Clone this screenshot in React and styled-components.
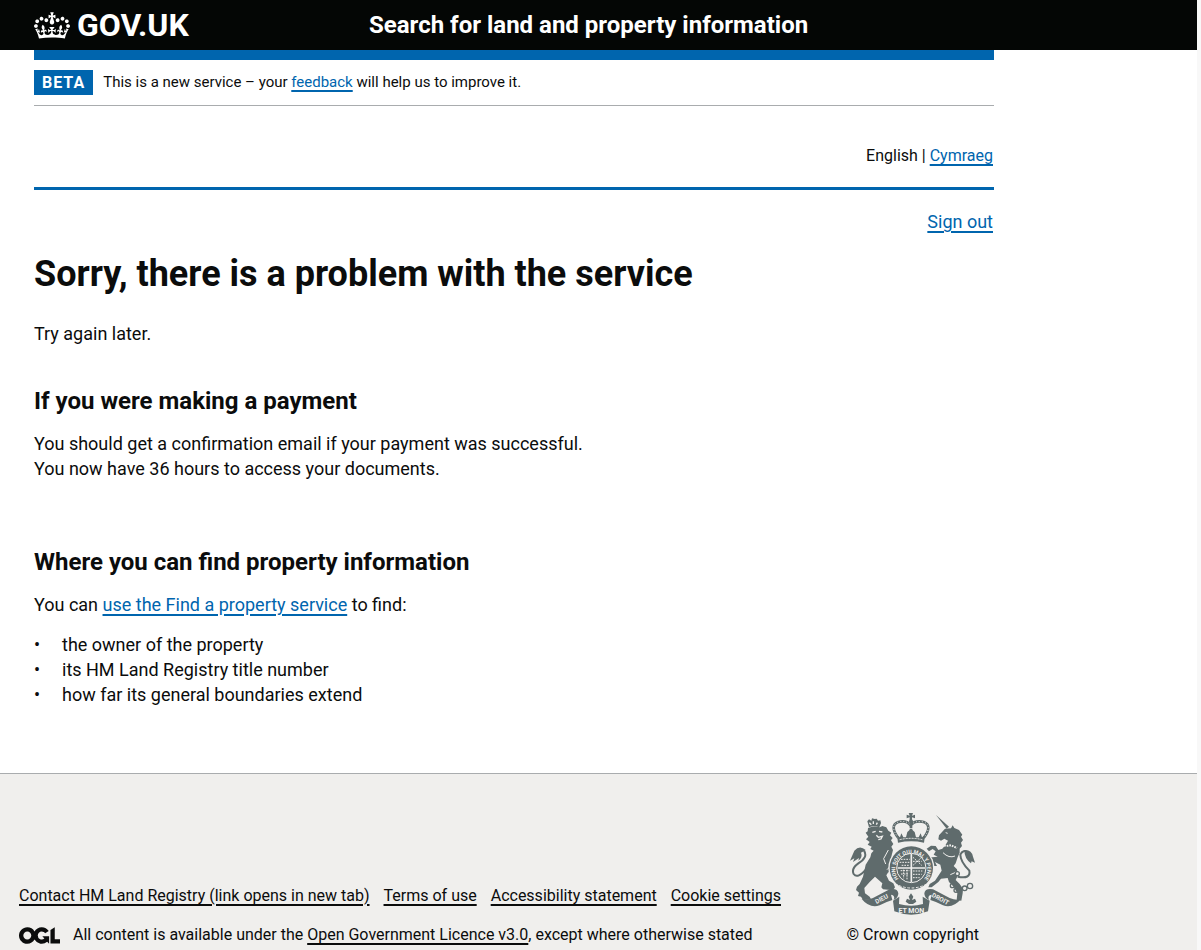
import React from 'react';
import styled, { createGlobalStyle } from 'styled-components';

const ink = '#0b0c0c';
const black = '#040605';
const blue = '#0065ae';
const rule = '#a9acae';
const stone = '#5f6b6c';
const footerBg = '#f0efed';

const GlobalStyle = createGlobalStyle`
  *, *::before, *::after { box-sizing: border-box; }
  body {
    margin: 0;
    background: #fff;
    color: ${ink};
    font-family: Roboto, "Liberation Sans", sans-serif;
    font-size: 18px;
    line-height: 25px;
  }
`;

const Page = styled.div`
  border-right: 4px solid #f8f8f8;
`;

const Header = styled.header`
  background: ${black};
  color: #fff;
`;

const HeaderInner = styled.div`
  display: grid;
  grid-template-columns: 335px 1fr;
  align-items: center;
  max-width: 994px;
  min-height: 50px;
  padding-left: 34px;
`;

const HomeLink = styled.a`
  display: flex;
  align-items: center;
  gap: 7px;
  color: inherit;
  font-size: 32px;
  font-weight: 700;
  line-height: 30px;
  text-decoration: none;
`;

const ServiceName = styled.a`
  color: inherit;
  font-size: 24px;
  font-weight: 700;
  line-height: 30px;
  text-decoration: none;
`;

const Container = styled.div`
  max-width: 994px;
  padding-left: 34px;
`;

const PhaseBanner = styled.div`
  display: flex;
  align-items: center;
  gap: 10px;
  padding: 10px 0;
  border-top: 10px solid ${blue};
  border-bottom: 1px solid ${rule};
  font-size: 15px;
`;

const PhaseTag = styled.strong`
  padding: 0 8px;
  background: ${blue};
  color: #fff;
  font-size: 16px;
  letter-spacing: 1px;
`;

const Link = styled.a`
  color: ${p => (p.$dark ? ink : blue)};
  text-decoration: underline;
  text-decoration-thickness: 2px;
  text-underline-offset: 3px;
`;

const LanguageBar = styled.nav`
  padding: 37px 1px 19px;
  border-bottom: 3px solid ${blue};
  font-size: 16px;
  text-align: right;
`;

const SignOut = styled.div`
  padding: 19px 1px 0;
  text-align: right;
`;

const Title = styled.h1`
  margin: 20px 0 27px;
  font-size: 36px;
  font-weight: 700;
  line-height: 40px;
`;

const Heading = styled.h2`
  margin: 0 0 15px;
  font-size: 24px;
  font-weight: 700;
  line-height: 30px;
`;

const Section = styled.section`
  margin-top: ${p => p.$space}px;
`;

const Text = styled.p`
  margin: 0;
`;

const List = styled.ul`
  margin: 15px 0 0;
  padding: 0;
  list-style: none;
`;

const Item = styled.li`
  display: flex;
  &::before {
    content: '•';
    width: 28px;
  }
`;

const Footer = styled.footer`
  margin-top: 66px;
  padding: 39px 0 5px 19px;
  background: ${footerBg};
  border-top: 1px solid ${rule};
  font-size: 16px;
  line-height: 20px;
`;

const FooterInner = styled.div`
  display: flex;
  align-items: flex-end;
  justify-content: space-between;
  max-width: 960px;
`;

const FooterMeta = styled.div`
  display: flex;
  flex-direction: column;
  gap: 19px;
`;

const FooterLinks = styled.nav`
  display: flex;
  gap: 14px;
`;

const Licence = styled.div`
  display: flex;
  align-items: center;
  gap: 13px;
`;

const Copyright = styled.a`
  display: flex;
  flex-direction: column;
  align-items: center;
  gap: 10px;
  color: ${ink};
  text-decoration: none;
`;

const Crown = () => (
  <svg width="36" height="27" viewBox="0 0 132 97" fill="currentColor" aria-hidden="true">
    <path d="M25 30.2c3.5 1.5 7.7-.2 9.1-3.7 1.5-3.6-.2-7.8-3.9-9.2-3.6-1.4-7.6.3-9.1 3.9-1.4 3.5.3 7.5 3.9 9zM9 39.5c3.6 1.5 7.8-.2 9.2-3.7 1.5-3.6-.2-7.8-3.9-9.1-3.6-1.5-7.6.2-9.1 3.8-1.4 3.5.3 7.5 3.8 9zM4.4 57.2c3.5 1.5 7.7-.2 9.1-3.8 1.5-3.6-.2-7.7-3.9-9.1-3.5-1.5-7.6.3-9.1 3.8-1.4 3.5.3 7.6 3.9 9.1zm38.3-21.4c3.5 1.5 7.7-.2 9.1-3.8 1.5-3.6-.2-7.7-3.9-9.1-3.6-1.5-7.6.3-9.1 3.8-1.3 3.6.4 7.7 3.9 9.1zm64.4-5.6c-3.6 1.5-7.8-.2-9.1-3.7-1.5-3.6.2-7.8 3.8-9.2 3.6-1.4 7.7.3 9.2 3.9 1.3 3.5-.4 7.5-3.9 9zm15.9 9.3c-3.6 1.5-7.7-.2-9.1-3.7-1.5-3.6.2-7.8 3.7-9.1 3.6-1.5 7.7.2 9.2 3.8 1.5 3.5-.3 7.5-3.8 9zm4.7 17.7c-3.6 1.5-7.8-.2-9.2-3.8-1.5-3.6.2-7.7 3.9-9.1 3.6-1.5 7.7.3 9.2 3.8 1.3 3.5-.4 7.6-3.9 9.1zM89.3 35.8c-3.6 1.5-7.8-.2-9.2-3.8-1.4-3.6.2-7.7 3.9-9.1 3.6-1.5 7.7.3 9.2 3.8 1.4 3.6-.3 7.7-3.9 9.1zM69.7 17.7l8.9 4.7V9.3l-8.9 2.8c-.2-.3-.5-.6-.9-.9L72.4 0H59.6l3.5 11.2c-.3.3-.6.5-.9.9l-8.8-2.8v13.1l8.8-4.7c.3.3.6.7.9.9l-5 15.4v.1c-.2.8-.4 1.6-.4 2.4 0 4.1 3.1 7.5 7 8.1h.2c.3 0 .7.1 1 .1.4 0 .7 0 1-.1h.2c4-.6 7.1-4.1 7.1-8.1 0-.8-.1-1.7-.4-2.4V34l-5.1-15.4c.4-.2.7-.6 1-.9zM66 92.8c16.9 0 32.8 1.1 47.1 3.2 4-16.9 8.9-26.7 14-33.5l-9.6-3.4c1 4.9 1.1 7.2 0 10.2-1.5-1.4-3-4.3-4.2-8.7L108.6 76c2.8-2 5-3.2 7.5-3.3-4.4 9.4-10 11.9-13.6 11.2-4.3-.8-6.3-4.6-5.6-7.9 1-4.7 5.7-5.9 8-.5 4.3-8.7-3-11.4-7.6-8.8 7.1-7.2 7.9-13.5 2.1-21.1-8 6.1-8.1 12.3-4.5 20.8-4.7-5.4-12.1-2.5-9.5 6.2 3.4-5.2 7.9-2 7.2 3.1-.6 4.3-6.4 7.8-13.5 7.2-10.3-.9-10.9-8-11.2-13.8 2.5-.5 7.1 1.8 11 7.3L80.2 60c-4.1 4.4-8 5.3-12.3 5.4 1.4-4.4 8-11.6 8-11.6H55.5s6.4 7.2 7.9 11.6c-4.2-.1-8-1-12.3-5.4l1.4 16.4c3.9-5.5 8.5-7.7 10.9-7.3-.3 5.8-.9 12.8-11.1 13.8-7.2.6-12.9-2.9-13.5-7.2-.7-5 3.8-8.3 7.1-3.1 2.7-8.7-4.6-11.6-9.4-6.2 3.7-8.5 3.6-14.7-4.6-20.8-5.8 7.6-5 13.9 2.2 21.1-4.7-2.6-11.9.1-7.7 8.8 2.3-5.5 7.1-4.2 8.1.5.7 3.3-1.3 7.1-5.7 7.9-3.5.7-9-1.8-13.5-11.2 2.5.1 4.7 1.3 7.5 3.3l-4.7-15.4c-1.2 4.4-2.7 7.2-4.3 8.7-1.1-3-.9-5.3 0-10.2l-9.5 3.4c5 6.9 9.9 16.7 14 33.5 14.8-2.1 30.8-3.2 47.7-3.2z" />
  </svg>
);

const OglLogo = () => (
  <svg width="41" height="17" viewBox="0 0 483.2 195.7" fill="currentColor" role="img" aria-label="Open Government Licence">
    <path d="M421.5 142.8V.1l-50.7 32.3v161.1h112.4v-50.7zm-122.3-9.6A47.12 47.12 0 0 1 221 97.8c0-26 21.1-47.1 47.1-47.1 16.7 0 31.4 8.7 39.7 21.8l42.7-27.2A97.63 97.63 0 0 0 268.1 0c-36.5 0-68.3 20.1-85.1 49.7A98 98 0 0 0 97.8 0C43.9 0 0 43.9 0 97.8s43.9 97.8 97.8 97.8c36.5 0 68.3-20.1 85.1-49.7a97.76 97.76 0 0 0 149.6 25.4l19.4 22.2h3v-87.8h-80l24.3 27.5zM97.8 145c-26 0-47.1-21.1-47.1-47.1s21.1-47.1 47.1-47.1 47.1 21.1 47.1 47.1S123.8 145 97.8 145" />
  </svg>
);

const Motto = styled.text`
  font-family: Roboto, sans-serif;
  font-size: ${p => p.$size}px;
  font-weight: 700;
  fill: ${footerBg};
  text-anchor: middle;
`;

const RoyalArms = () => (
  <svg width="125" height="102" viewBox="33 39 375 306" fill={stone} aria-hidden="true">
    <defs>
      <path id="garter" d="M182 241A48 48 0 1 1 252 241" />
    </defs>

    {/* lion */}
    <path d="M90 82L85 64 90 58 97 62 99 55 107 57 113 56 117 62 124 61 126 69 121 82Q105 75 90 82Z" />
    <path d="M91 68l6 6M103 64v8M115 68l-3 6" stroke={footerBg} strokeWidth="4" fill="none" />
    <path d="M87 84Q104 76 122 82L130 78 142 82 148 92 157 98 153 106 161 114 156 121 163 132 157 140 162 150 158 166 156 190 166 206 172 224 160 228 148 216 142 226 150 242 163 250 168 262 162 271 132 268 127 262 130 250 108 230 92 246 76 264 78 280 92 290 97 299 72 300 66 290 57 288 60 278 51 270 54 260 62 252 72 230 80 194 94 172 97 160 104 152 94 147 98 140 86 134 92 126 81 118 88 110 80 98 86 94Z" />
    <path d="M100 97l10-3M120 94l10 2M112 106l6 6 12-3-4 8-8 2" stroke={footerBg} strokeWidth="4" fill="none" />
    <path d="M148 150l-14 26 6 16M158 195l-14 14" stroke={footerBg} strokeWidth="3" fill="none" />
    <path d="M83 206Q56 238 44 222 36 206 58 190 88 172 75 152" fill="none" stroke={stone} strokeWidth="6" />
    <path d="M80 150Q62 134 46 152 40 166 33 182L46 175 42 186 60 174 58 182Q72 172 66 158Z" />

    {/* crown */}
    <path d="M209 39h13l-3 8 9-3v11l-9-3v8h-7v-8l-9 3V44l9 3z" />
    <circle cx="216" cy="64" r="6" />
    <path d="M178 114Q150 76 178 66 202 60 215 76 228 60 254 66 282 76 254 114" fill="none" stroke={stone} strokeWidth="8" />
    <path d="M178 114Q150 76 178 66 202 60 215 76 228 60 254 66 282 76 254 114" fill="none" stroke={footerBg} strokeWidth="3" strokeDasharray="3 6" />
    <path d="M216 70v28" stroke={stone} strokeWidth="8" strokeDasharray="6 2" />
    <path d="M177 128L174 106l9 6 4-12 6 12 8 0 4-16 11-10 11 10 4 16 8 0 6-12 4 12 9-6-3 22Q217 120 177 128Z" />
    <path d="M182 119Q216 111 250 119" fill="none" stroke={footerBg} strokeWidth="3" strokeDasharray="6 3" />

    {/* unicorn */}
    <path d="M291 45L330 80 323 86Z" />
    <path d="M318 86L336 85 341 76 346 84 360 90 370 104 366 110 372 120 366 128 369 138 362 146 362 158 356 172 350 190 344 198 354 208 357 226 350 240 362 252 372 266 371 280 367 302 353 300 355 280 344 260 330 246 326 234 306 236 298 246 278 262 268 262 272 252 288 242 300 224 308 212 304 194 288 186 294 198 286 198 272 182 264 168 280 172 296 170 284 164 290 154 281 147 270 154 263 146 276 137 290 138 298 150 310 146 320 134 327 122 316 116 306 122 298 118 300 106Z" />
    <path d="M308 133l12 5 16-2 18 8" fill="none" stroke={footerBg} strokeWidth="6" strokeDasharray="5 3" />
    <path d="M320 98l6 2M312 158q18 18 36 10M334 224l18-8" fill="none" stroke={footerBg} strokeWidth="3" />
    <path d="M356 230Q396 238 391 212 364 184 364 164 372 146 388 158" fill="none" stroke={stone} strokeWidth="6" />
    <path d="M376 150Q398 148 402 170L408 188 398 184 396 190Q376 176 376 150Z" />
    <circle cx="355" cy="221" r="6" fill={footerBg} stroke={stone} strokeWidth="4" />
    <g fill="none" stroke={stone} strokeWidth="4">
      <circle cx="340" cy="257" r="6" />
      <circle cx="351" cy="271" r="6" />
      <circle cx="377" cy="265" r="7" />
      <circle cx="393" cy="258" r="8" />
      <path d="M357 270l14-3" />
    </g>

    {/* garter and shield */}
    <circle cx="217" cy="204" r="69" fill={footerBg} />
    <path d="M175 130h84v20h-84z" fill={footerBg} />
    <circle cx="217" cy="204" r="65" />
    <circle cx="217" cy="204" r="44" fill="none" stroke={footerBg} strokeWidth="3" />
    <Motto $size={16}>
      <textPath href="#garter" startOffset="50%">HONI SOIT QUI MAL Y PENSE</textPath>
    </Motto>
    <g fill="none" stroke={footerBg}>
      <path d="M217 162v84M176 204h82" strokeWidth="5" />
      <path d="M186 178h26M182 187h29M188 196h24M222 172l26 24M248 172l-26 24M222 184h26M185 212h26M186 222h24M194 209v26M204 209v30M222 213h28M222 223h26M222 233h20" strokeWidth="3" strokeDasharray="5 3" />
      <path d="M168 251q48 26 98 0" strokeWidth="3" strokeDasharray="8 5" />
    </g>

    {/* ribbon */}
    <path d="M68 297Q82 302 102 294L152 268Q176 264 178 280 178 294 164 300 170 286 156 284 L160 300Q140 306 122 316 92 326 68 297Z" />
    <path d="M366 297Q352 302 332 294L282 268Q258 264 256 280 256 294 270 300 264 286 278 284L274 300Q294 306 312 316 342 326 366 297Z" />
    <path d="M162 302L181 290 180 312Q217 322 252 312L251 290 272 302 267 334Q217 354 166 334Z" />
    <path d="M216 280l7 10-4 10 9-4 4 9-10 7h-12l-10-7 4-9 9 4-4-10z" />
    <Motto $size={19} x="128" y="303" transform="rotate(-27 128 297)">DIEU</Motto>
    <Motto $size={21} x="217" y="339">ET MON</Motto>
    <Motto $size={19} x="304" y="303" transform="rotate(28 304 297)">DROIT</Motto>
  </svg>
);

export default function App() {
  return (
    <Page>
      <GlobalStyle />
      <Header>
        <HeaderInner>
          <HomeLink href="#home">
            <Crown />
            <span>GOV.UK</span>
          </HomeLink>
          <ServiceName href="#service">Search for land and property information</ServiceName>
        </HeaderInner>
      </Header>

      <Container>
        <PhaseBanner>
          <PhaseTag>BETA</PhaseTag>
          <span>
            This is a new service – your <Link href="#feedback">feedback</Link> will help us to improve it.
          </span>
        </PhaseBanner>
        <LanguageBar aria-label="Language">
          English | <Link href="#cymraeg">Cymraeg</Link>
        </LanguageBar>
        <SignOut>
          <Link href="#sign-out">Sign out</Link>
        </SignOut>

        <main>
          <Title>Sorry, there is a problem with the service</Title>
          <Text>Try again later.</Text>
          <Section $space={40}>
            <Heading>If you were making a payment</Heading>
            <Text>
              You should get a confirmation email if your payment was successful.
              <br />
              You now have 36 hours to access your documents.
            </Text>
          </Section>
          <Section $space={66}>
            <Heading>Where you can find property information</Heading>
            <Text>
              You can <Link href="#find">use the Find a property service</Link> to find:
            </Text>
            <List>
              <Item>the owner of the property</Item>
              <Item>its HM Land Registry title number</Item>
              <Item>how far its general boundaries extend</Item>
            </List>
          </Section>
        </main>
      </Container>

      <Footer>
        <FooterInner>
          <FooterMeta>
            <FooterLinks aria-label="Support links">
              <Link $dark href="#contact">Contact HM Land Registry (link opens in new tab)</Link>
              <Link $dark href="#terms">Terms of use</Link>
              <Link $dark href="#accessibility">Accessibility statement</Link>
              <Link $dark href="#cookies">Cookie settings</Link>
            </FooterLinks>
            <Licence>
              <OglLogo />
              <span>
                All content is available under the{' '}
                <Link $dark href="#licence">Open Government Licence v3.0</Link>, except where otherwise stated
              </span>
            </Licence>
          </FooterMeta>
          <Copyright href="#copyright">
            <RoyalArms />
            <span>© Crown copyright</span>
          </Copyright>
        </FooterInner>
      </Footer>
    </Page>
  );
}
